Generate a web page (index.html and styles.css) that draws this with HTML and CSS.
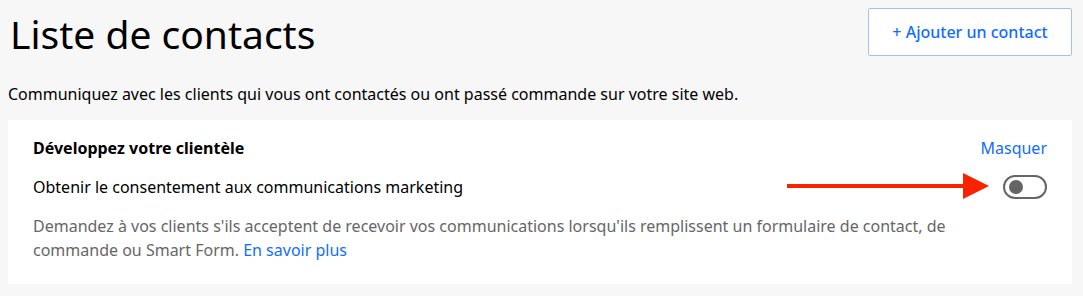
FILE: index.html
```html
<!DOCTYPE html>
<html lang="fr">
<head>
<meta charset="utf-8">
<link rel="stylesheet" href="styles.css">
</head>
<body>
<div class="page">
  <header class="header">
    <h1 class="title">Liste de contacts</h1>
    <button class="add-btn">+ Ajouter un contact</button>
  </header>
  <p class="subtitle">Communiquez avec les clients qui vous ont contactés ou ont passé commande sur votre site web.</p>
  <section class="card">
    <div class="card-head">
      <h2 class="card-title">Développez votre clientèle</h2>
      <a class="link hide">Masquer</a>
    </div>
    <div class="row">
      <span class="row-label">Obtenir le consentement aux communications marketing</span>
      <svg class="arrow" width="204" height="28" viewBox="0 0 204 28">
        <rect x="0" y="11" width="180" height="4" fill="#fa2300"/>
        <polygon points="176,0 202,13 176,26" fill="#fa2300"/>
      </svg>
      <span class="toggle"><span class="knob"></span></span>
    </div>
    <p class="desc">Demandez à vos clients s'ils acceptent de recevoir vos communications lorsqu'ils remplissent un formulaire de contact, de commande ou Smart&nbsp;Form. <a class="link">En savoir plus</a></p>
  </section>
</div>
</body>
</html>
```
FILE: styles.css
```css
html, body {
  margin: 0;
  padding: 0;
  background: #f7f7f7;
}
body {
  font-family: "Noto Sans", "DejaVu Sans", sans-serif;
  color: #000;
}
.page {
  padding: 8px 11px 0 8px;
}
.header {
  display: flex;
  justify-content: space-between;
  align-items: flex-start;
  height: 74px;
}
.title {
  margin: 2px 0 0 2px;
  font-size: 39px;
  font-weight: 400;
  line-height: 48px;
  letter-spacing: 0;
}
.add-btn {
  width: 204px;
  height: 48px;
  background: #fff;
  border: 1px solid #a8bdff;
  border-radius: 2px;
  color: #116dff;
  font-family: inherit;
  font-size: 16px;
  font-weight: 500;
  padding: 0;
}
.subtitle {
  margin: 0;
  font-size: 16px;
  line-height: 24px;
  height: 38px;
}
.card {
  background: #fff;
  height: 164px;
  padding: 16px 25px 0 25px;
  box-sizing: border-box;
}
.card-head {
  display: flex;
  justify-content: space-between;
  align-items: center;
  height: 24px;
}
.card-title {
  margin: 0;
  font-size: 16px;
  font-weight: 700;
  line-height: 24px;
}
.link {
  color: #116dff;
  text-decoration: none;
  cursor: pointer;
}
.hide {
  font-size: 16px;
  line-height: 24px;
}
.row {
  display: flex;
  align-items: center;
  margin-top: 15px;
  height: 24px;
}
.row-label {
  font-size: 16px;
  line-height: 24px;
  flex: 1;
}
.arrow {
  margin-right: 12px;
  flex: none;
}
.toggle {
  flex: none;
  box-sizing: border-box;
  width: 44px;
  height: 24px;
  border: 2px solid #666;
  border-radius: 12px;
  display: flex;
  align-items: center;
  padding-left: 4px;
}
.knob {
  width: 14px;
  height: 14px;
  border-radius: 50%;
  background: #646464;
}
.desc {
  margin: 15px 0 0 0;
  font-size: 16px;
  line-height: 24px;
  color: #666;
  max-width: 990px;
}
```
